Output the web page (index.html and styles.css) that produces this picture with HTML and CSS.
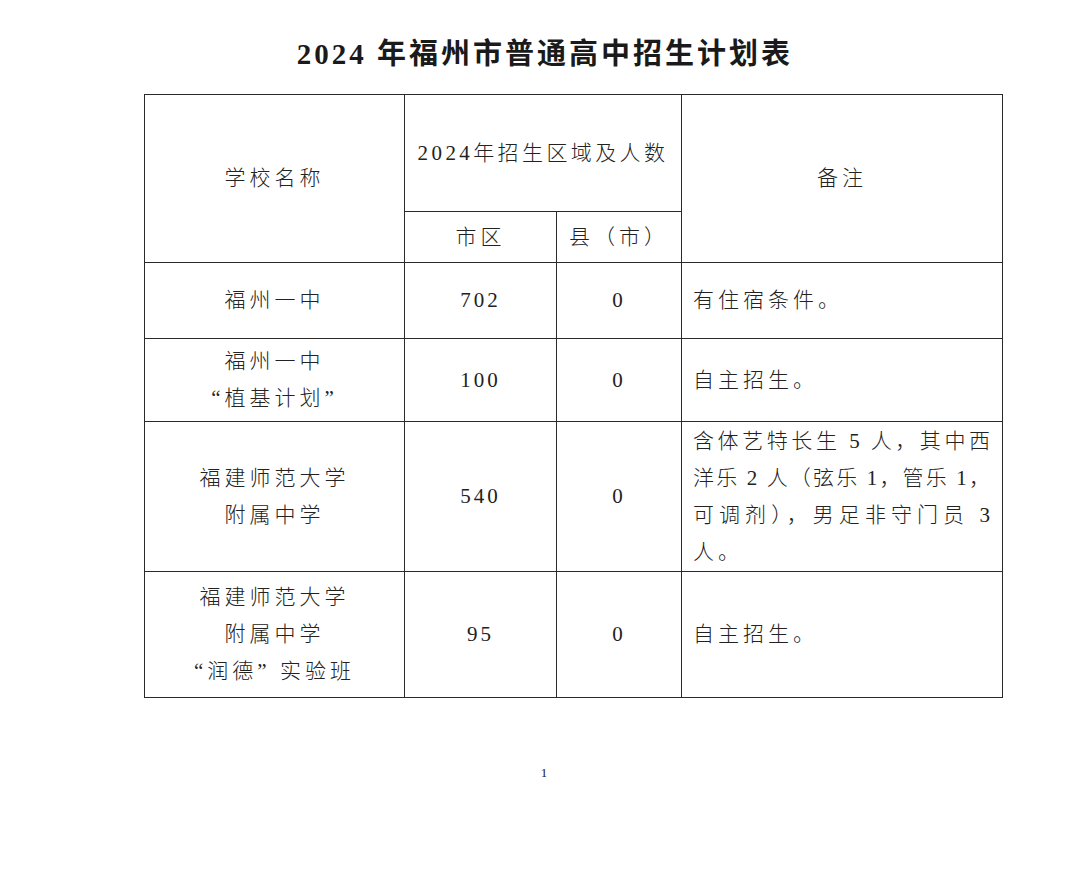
FILE: index.html
```html
<!DOCTYPE html>
<html lang="zh-CN">
<head>
<meta charset="utf-8">
<title>2024年福州市普通高中招生计划表</title>
<link rel="stylesheet" href="styles.css">
</head>
<body>
<div class="page">
  <h1 class="title">2024 年福州市普通高中招生计划表</h1>
  <table class="plan">
    <colgroup>
      <col class="c-name"><col class="c-city"><col class="c-county"><col class="c-note">
    </colgroup>
    <tr class="h1">
      <td rowspan="2">学校名称</td>
      <td colspan="2" class="region">2024年招生区域及人数</td>
      <td rowspan="2">备注</td>
    </tr>
    <tr class="h2">
      <td>市区</td>
      <td>县（市）</td>
    </tr>
    <tr class="r1">
      <td>福州一中</td>
      <td class="num">702</td>
      <td class="num">0</td>
      <td class="note">有住宿条件。</td>
    </tr>
    <tr class="r2">
      <td>福州一中<br>“植基计划”</td>
      <td class="num">100</td>
      <td class="num">0</td>
      <td class="note">自主招生。</td>
    </tr>
    <tr class="r3">
      <td>福建师范大学<br>附属中学</td>
      <td class="num">540</td>
      <td class="num">0</td>
      <td class="note">
        <span class="jl">含体艺特长生 5 人，其中西</span>
        <span class="jl">洋乐 2 人（弦乐 1，管乐 1，</span>
        <span class="jl">可调剂），男足非守门员 3</span>
        <span class="ll">人。</span>
      </td>
    </tr>
    <tr class="r4">
      <td>福建师范大学<br>附属中学<br>“润德” 实验班</td>
      <td class="num">95</td>
      <td class="num">0</td>
      <td class="note">自主招生。</td>
    </tr>
  </table>
  <div class="pageno">1</div>
</div>
</body>
</html>
```

FILE: styles.css
```css
html, body {
  margin: 0;
  padding: 0;
  background: #ffffff;
}
body {
  width: 1080px;
  height: 872px;
  overflow: hidden;
  color: #222222;
  font-family: "Liberation Serif", "Noto Sans CJK SC", serif;
}
.page {
  padding-top: 31px;
}
.title {
  margin: 0;
  height: 63px;
  text-align: center;
  font-size: 29px;
  font-weight: 700;
  letter-spacing: 3px;
  line-height: 46px;
  padding-left: 10px;
  color: #1a1a1a;
}
.plan {
  margin-left: 144px;
  width: 858px;
  border-collapse: collapse;
  table-layout: fixed;
  font-size: 21px;
  font-weight: 300;
  letter-spacing: 4px;
}
.c-name { width: 260px; }
.c-city { width: 152px; }
.c-county { width: 125px; }
.c-note { width: 321px; }
.plan td {
  border: 1px solid #2a2a2a;
  text-align: center;
  vertical-align: middle;
  padding: 0;
  line-height: 37px;
}
.plan td.num { letter-spacing: 3px; }
.plan .region { letter-spacing: 3.4px; }
.h1 { height: 117px; }
.h2 { height: 51px; }
.r1 { height: 76px; }
.r2 { height: 83px; }
.r3 { height: 150px; }
.r4 { height: 126px; }
.plan td.note {
  text-align: left;
  padding: 0 10px 0 11px;
}
.jl {
  display: block;
  text-align: justify;
  text-align-last: justify;
  letter-spacing: 2px;
}
.ll {
  display: block;
}
.pageno {
  margin-top: 67px;
  text-align: center;
  padding-left: 8px;
  font-size: 13px;
  color: #222;
}
```
